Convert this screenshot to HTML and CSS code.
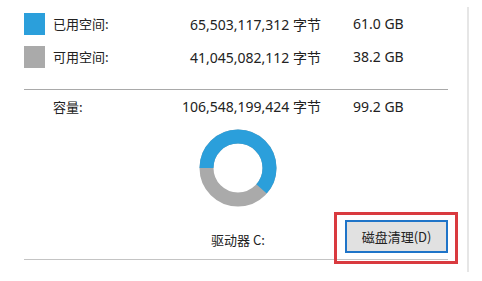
FILE: index.html
```html
<!DOCTYPE html>
<html lang="zh-CN">

<head>
    <meta charset="UTF-8">
    <meta name="viewport" content="width=device-width, initial-scale=1.0">
    <title>本地磁盘 (C:) 属性</title>
    <link rel="stylesheet" href="styles.css">
</head>

<body>
    <div id="tab-page">
        <div id="usage">
            <div class="row">
                <span class="swatch used"></span>
                <span class="label">已用空间:</span>
                <span class="bytes">65,503,117,312 字节</span>
                <span class="size">61.0 GB</span>
            </div>
            <div class="row">
                <span class="swatch free"></span>
                <span class="label">可用空间:</span>
                <span class="bytes">41,045,082,112 字节</span>
                <span class="size">38.2 GB</span>
            </div>

            <div class="divider"></div>

            <div class="row total">
                <span></span>
                <span class="label">容量:</span>
                <span class="bytes">106,548,199,424 字节</span>
                <span class="size">99.2 GB</span>
            </div>
        </div>

        <div id="chart">
            <svg width="78" height="78" viewBox="0 0 78 78">
                <!-- used = 61.0 / 99.2 of the ring, starting at 9 o'clock -->
                <circle cx="39" cy="39" r="31.5" fill="none" stroke="#aaaaaa" stroke-width="14" />
                <circle cx="39" cy="39" r="31.5" fill="none" stroke="#2b9fdb" stroke-width="14"
                    stroke-dasharray="121.7 200" transform="rotate(180 39 39)" />
            </svg>
        </div>

        <div id="drive-bar">
            <span></span>
            <span class="drive-name">驱动器 C:</span>
            <div class="btn-wrap">
                <button id="cleanup">磁盘清理(D)</button>
            </div>
        </div>
    </div>
</body>

</html>
```

FILE: styles.css
```css
* {
    margin: 0;
    padding: 0;
    box-sizing: border-box;
}

body {
    background-color: #fff;
    font-family: "Noto Sans", "Noto Sans CJK SC", sans-serif;
    font-size: 14px;
    color: #222;
}

#tab-page {
    width: 469px;
    height: 265px;
    margin-top: 7px;
    padding-left: 24px;
    padding-right: 19px;
    border-right: 2px solid #e6e6e6;
}

/* --------  USAGE TABLE ------------------- */
.row {
    display: grid;
    grid-template-columns: 29px 117px 151px 1fr;
    align-items: center;
    height: 33px;
}

.total {
    height: 32px;
}

.swatch {
    width: 21px;
    height: 22px;
}

.used {
    background-color: #2b9fdb;
}

.free {
    background-color: #aaaaaa;
}

.label {
    font-family: "Noto Sans CJK SC", sans-serif;
    font-size: 13px;
}

.bytes {
    text-align: right;
}

.size {
    padding-left: 32px;
}

.divider {
    height: 1px;
    background-color: #a9a9a9;
    margin-top: 16px;
}

/* --------  CHART ------------------- */
#chart {
    display: flex;
    justify-content: center;
    padding-top: 7px;
    padding-left: 4px;
}

/* --------  DRIVE + BUTTON ------------------- */
#drive-bar {
    display: grid;
    grid-template-columns: 1fr auto 1fr;
    align-items: center;
    margin-top: 13px;
    padding-bottom: 6px;
    border-bottom: 1px solid #c4c4c4;
}

.drive-name {
    font-family: "Noto Sans CJK SC", sans-serif;
    font-size: 13px;
    padding-top: 6px;
    padding-left: 4px;
}

.btn-wrap {
    justify-self: end;
    position: relative;
}

#cleanup {
    width: 103px;
    height: 33px;
    background-color: #e1e1e1;
    border: 2px solid #1f74c8;
    font-family: "Noto Sans CJK SC", sans-serif;
    font-size: 13px;
    color: #222;
    display: block;
}

/* red annotation box drawn over the button */
.btn-wrap::after {
    content: "";
    position: absolute;
    left: -11px;
    top: -8px;
    right: -10px;
    bottom: -11px;
    border: 3px solid #d93a3f;
}
```
